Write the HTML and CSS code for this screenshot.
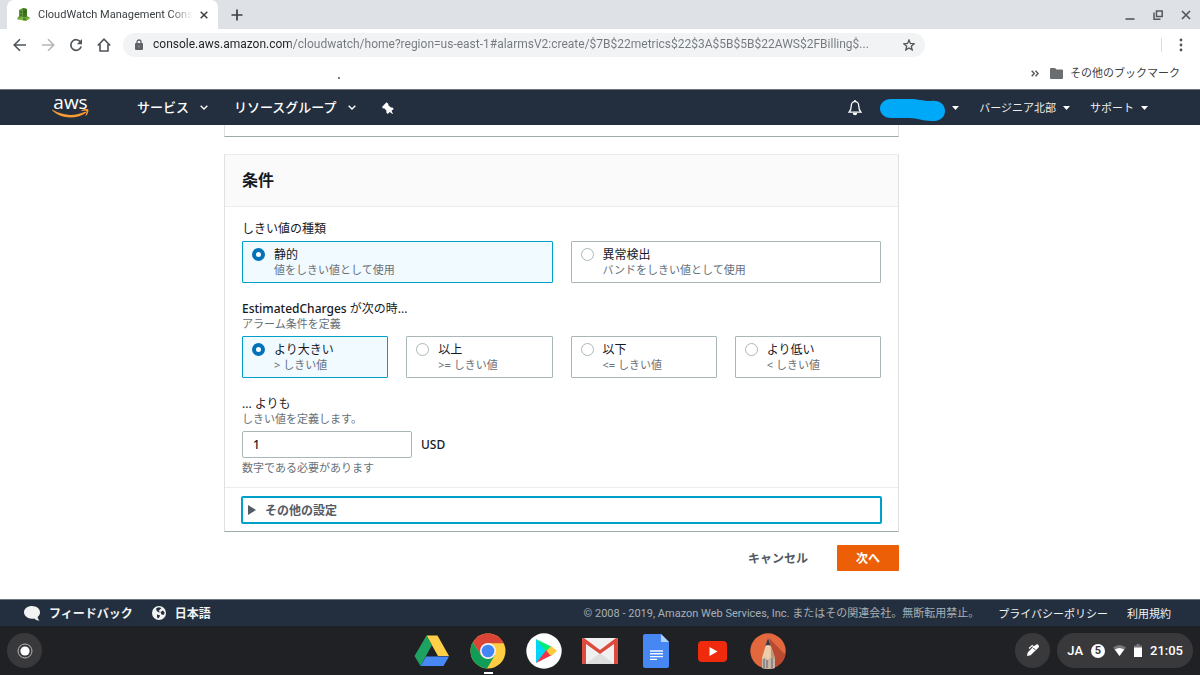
FILE: index.html
```html
<!DOCTYPE html>
<html lang="ja">
<head>
    <meta charset="utf-8">
    <title>CloudWatch Management Console</title>
    <link rel="stylesheet" href="styles.css">
</head>
<body>
    <div class="tab-strip">
        <div class="tab">
            <svg class="favicon" width="14" height="14" viewBox="0 0 14 14">
                <path d="M2 2l4-2 4 1v7l3 2-4 3-9-2 2-3z" fill="#5d9732"/>
                <path d="M6 0l4 1v7l-4 2z" fill="#3f7425"/>
                <path d="M0 11l5-2 8 1-4 3z" fill="#7eb543"/>
                <path d="M3 4h2M3 7h2M7 4h2M6 11h3" stroke="#29521c"/>
            </svg>
            <span class="tab-title">CloudWatch Management Cons</span>
            <button class="icon-button" aria-label="タブを閉じる">
                <svg width="8" height="8" viewBox="0 0 8 8"><path d="M.7.7l6.6 6.6M7.3.7L.7 7.3" stroke="#3c4043" stroke-width="1.5"/></svg>
            </button>
        </div>
        <button class="icon-button new-tab" aria-label="新しいタブ">
            <svg width="12" height="12" viewBox="0 0 12 12"><path d="M6 .5v11M.5 6h11" stroke="#3c4043" stroke-width="1.7"/></svg>
        </button>
        <div class="window-buttons">
            <button class="icon-button" aria-label="最小化">
                <svg width="10" height="10" viewBox="0 0 10 10"><path d="M.5 9h9" stroke="#54585d" stroke-width="1.6"/></svg>
            </button>
            <button class="icon-button" aria-label="元に戻す">
                <svg width="10" height="10" viewBox="0 0 10 10" fill="none" stroke="#54585d" stroke-width="1.5"><path d="M3.5 1h5.7v5.5H3.5zM1 2.5V9.2h6.5"/></svg>
            </button>
            <button class="icon-button" aria-label="閉じる">
                <svg width="10" height="10" viewBox="0 0 10 10"><path d="M1 1l8 8M9 1L1 9" stroke="#54585d" stroke-width="1.7"/></svg>
            </button>
        </div>
    </div>

    <div class="toolbar">
        <button class="icon-button" aria-label="戻る">
            <svg width="14" height="14" viewBox="0 0 14 14" fill="none" stroke="#50555a" stroke-width="1.6"><path d="M13 7H1.5M7 1.2L1.2 7 7 12.8"/></svg>
        </button>
        <button class="icon-button" aria-label="進む">
            <svg width="14" height="14" viewBox="0 0 14 14" fill="none" stroke="#b4b7ba" stroke-width="1.6"><path d="M1 7h11.5M7 1.2L12.8 7 7 12.8"/></svg>
        </button>
        <button class="icon-button" aria-label="再読み込み">
            <svg width="14" height="14" viewBox="0 0 14 14"><path d="M11.7 4.3A5.3 5.3 0 1 0 12.2 8.6" fill="none" stroke="#50555a" stroke-width="1.7"/><path d="M13 1v5.2H7.8z" fill="#50555a"/></svg>
        </button>
        <button class="icon-button" aria-label="ホーム">
            <svg width="14" height="14" viewBox="0 0 14 14" fill="none" stroke="#50555a" stroke-width="1.6"><path d="M.8 7.5L7 1.2l6.2 6.3M3 6v7h8V6"/></svg>
        </button>
        <div class="address-bar">
            <svg width="8" height="11" viewBox="0 0 8 11"><path d="M2 5V3a2 2 0 0 1 4 0v2" fill="none" stroke="#5f6368" stroke-width="1.3"/><rect y="4" width="8" height="7" rx="1" fill="#5f6368"/><circle cx="4" cy="7.5" r=".9" fill="#8b8f93"/></svg>
            <input class="url" type="text" aria-label="アドレス" value="console.aws.amazon.com/cloudwatch/home?region=us-east-1#alarmsV2:create/$7B$22metrics$22$3A$5B$5B$22AWS$2FBilling$...">
            <button class="icon-button" aria-label="ブックマークに追加">
                <svg width="12" height="12" viewBox="0 0 12 12"><path d="M6 1l1.4 3.5 3.8.3-2.9 2.4.9 3.7L6 8.9l-3.2 2 .9-3.7L.8 4.8l3.8-.3z" fill="none" stroke="#50555a" stroke-width="1.3"/></svg>
            </button>
        </div>
        <button class="icon-button menu-button" aria-label="メニュー">
            <svg width="4" height="14" viewBox="0 0 4 14" fill="#50555a"><circle cx="2" cy="2" r="1.4"/><circle cx="2" cy="7" r="1.4"/><circle cx="2" cy="12" r="1.4"/></svg>
        </button>
    </div>

    <div class="bookmarks">
        <span class="speck"></span>
        <button class="icon-button" aria-label="他のブックマーク">
            <svg width="8" height="7" viewBox="0 0 8 7" fill="none" stroke="#54585d" stroke-width="1.4"><path d="M.7.7l2.6 2.8L.7 6.3M4.5.7l2.6 2.8-2.6 2.8"/></svg>
        </button>
        <a class="bookmark" href="#">
            <svg width="13" height="11" viewBox="0 0 13 11"><path d="M1 0h4l1.5 1.6H12a1 1 0 0 1 1 1V10a1 1 0 0 1-1 1H1a1 1 0 0 1-1-1V1a1 1 0 0 1 1-1z" fill="#6b6e71"/></svg>
            その他のブックマーク
        </a>
    </div>

    <nav class="aws-nav">
        <a class="aws-logo" href="#">
            <span class="aws-name">aws</span>
            <svg width="37" height="9" viewBox="0 0 37 9" fill="#f79b34"><path d="M.5.8C11 7 23 7.500 33 2.800c1-.4 1.500.5.700 1.100C24 10.500 9 10 .2 1.600-.2 1.100.1.600.5.8z"/><path d="M29.500 1.400C31.500-.1 35.500-.2 36.200.5c.7.9-.2 4.700-2.200 6.300-.4.300-.7.100-.5-.3.700-1.600 1.300-3.700.9-4.300-.5-.6-2.800-.5-4.500-.3-.5.100-.7-.2-.4-.5z"/></svg>
        </a>
        <a class="nav-main" href="#">サービス
            <svg width="8" height="5" viewBox="0 0 8 5"><path d="M.7.7L4 4 7.300.7" fill="none" stroke="#fff" stroke-width="1.400"/></svg>
        </a>
        <a class="nav-main" href="#">リソースグループ
            <svg width="8" height="5" viewBox="0 0 8 5"><path d="M.7.7L4 4 7.300.7" fill="none" stroke="#fff" stroke-width="1.400"/></svg>
        </a>
        <button class="icon-button pin" aria-label="ピン留め">
            <svg width="12" height="12" viewBox="0 0 12 12" fill="#fff"><path d="M4.500.2l2 1.800-.2 1.300L9 5.600l1.400-.2 1.400 1.500-2.300 1.900L11 11.900l-.5.100-2.800-2-1.900 2-1.500-1.500.2-1.700L2.200 6.200.7 6.400.2 4.800z"/></svg>
        </button>
        <div class="nav-right">
            <button class="icon-button" aria-label="通知">
                <svg width="14" height="16" viewBox="0 0 14 16"><path d="M7 1.700c2.500 0 3.700 1.800 3.700 4 0 3.500.7 4.800 2.300 6.500H1c1.600-1.700 2.300-3 2.300-6.500 0-2.200 1.200-4 3.700-4z" fill="none" stroke="#fff" stroke-width="1.300"/><path d="M6.200 0h1.600v2H6.200zM4.800 13h4.400a2.200 2.200 0 0 1-4.400 0z" fill="#fff"/></svg>
            </button>
            <a class="account" href="#" aria-label="アカウント">
                <svg width="66" height="26" viewBox="0 0 66 26"><path d="M11 4h19c9 0 12 2 21 2 9-1 14 4 14 10s-5 11-14 10c-9 0-13-3-22-3H11C4 23 0 18 0 13.500S4 4 11 4z" fill="#00a8f8"/></svg>
                <svg width="7" height="4" viewBox="0 0 7 4"><path d="M0 0h7L3.500 4z" fill="#fff"/></svg>
            </a>
            <a class="nav-sub" href="#">バージニア北部
                <svg width="7" height="4" viewBox="0 0 7 4"><path d="M0 0h7L3.500 4z" fill="#fff"/></svg>
            </a>
            <a class="nav-sub" href="#">サポート
                <svg width="7" height="4" viewBox="0 0 7 4"><path d="M0 0h7L3.500 4z" fill="#fff"/></svg>
            </a>
        </div>
    </nav>

    <main class="content">
        <div class="card card-previous"></div>

        <form class="card">
            <h2 class="card-title">条件</h2>
            <div class="card-body">
                <div class="field" role="radiogroup" aria-labelledby="type-label">
                    <div class="field-head">
                        <div id="type-label">しきい値の種類</div>
                    </div>
                    <div class="tiles tiles-2">
                        <label class="tile selected">
                            <input class="radio" type="radio" name="type" checked>
                            <span>静的<small class="hint">値をしきい値として使用</small></span>
                        </label>
                        <label class="tile">
                            <input class="radio" type="radio" name="type">
                            <span>異常検出<small class="hint">バンドをしきい値として使用</small></span>
                        </label>
                    </div>
                </div>

                <div class="field" role="radiogroup" aria-labelledby="operator-label">
                    <div class="field-head">
                        <div id="operator-label"><span class="latin">EstimatedCharges</span> が次の時...</div>
                        <small class="hint">アラーム条件を定義</small>
                    </div>
                    <div class="tiles tiles-4">
                        <label class="tile selected">
                            <input class="radio" type="radio" name="operator" checked>
                            <span>より大きい<small class="hint">&gt; しきい値</small></span>
                        </label>
                        <label class="tile">
                            <input class="radio" type="radio" name="operator">
                            <span>以上<small class="hint">&gt;= しきい値</small></span>
                        </label>
                        <label class="tile">
                            <input class="radio" type="radio" name="operator">
                            <span>以下<small class="hint">&lt;= しきい値</small></span>
                        </label>
                        <label class="tile">
                            <input class="radio" type="radio" name="operator">
                            <span>より低い<small class="hint">&lt; しきい値</small></span>
                        </label>
                    </div>
                </div>

                <div class="field">
                    <div class="field-head">
                        <label for="threshold">... よりも</label>
                        <small class="hint">しきい値を定義します。</small>
                    </div>
                    <div class="amount">
                        <input class="amount-input" id="threshold" type="text" value="1">
                        <span class="latin">USD</span>
                    </div>
                    <small class="hint constraint">数字である必要があります</small>
                </div>
            </div>
            <div class="card-footer">
                <button class="expander" type="button" aria-expanded="false">
                    <svg width="8" height="10" viewBox="0 0 8 10"><path d="M0 0l8 5-8 5z" fill="#545b64"/></svg>
                    その他の設定
                </button>
            </div>
        </form>

        <div class="actions">
            <button class="button button-link">キャンセル</button>
            <button class="button button-primary">次へ</button>
        </div>
    </main>

    <footer class="aws-footer">
        <a class="footer-tool" href="#">
            <svg width="16" height="15" viewBox="0 0 16 15"><path d="M8 0c4.500 0 8 2.800 8 6.300 0 2-.9 3.600-2.400 4.700.2 1.400.8 2.500 1.900 3.500-2.200 0-3.900-.8-5.100-2.100-.8.200-1.600.3-2.400.3-4.500 0-8-2.800-8-6.400S3.500 0 8 0z" fill="#f2f3f3"/></svg>
            フィードバック
        </a>
        <a class="footer-tool" href="#">
            <svg width="14" height="14" viewBox="0 0 14 14"><circle cx="7" cy="7" r="7" fill="#f2f3f3"/><path d="M6.500 1.200L9.500 2 8 3.500 6.800 4.800 8 6.500 6 6 4.500 4.500 4 2.500zM8.500 6L11 4.500l1.700 2.300L11.500 9 9.500 8.500zM5 8.500l3 .8L7.500 11 6 12.500 5 11z" fill="#232f3e"/></svg>
            日本語
        </a>
        <span class="copyright">© 2008 - 2019, Amazon Web Services, Inc. またはその関連会社。無断転用禁止。</span>
        <a class="footer-link" href="#">プライバシーポリシー</a>
        <a class="footer-link" href="#">利用規約</a>
    </footer>

    <div class="shelf">
        <button class="round-button" aria-label="ランチャー">
            <svg width="16" height="16" viewBox="0 0 16 16"><circle cx="8" cy="8" r="7" fill="none" stroke="#b5b5b7"/><circle cx="8" cy="8" r="4.600" fill="#fff"/></svg>
        </button>
        <div class="apps">
            <button class="app" aria-label="ドライブ">
                <svg width="36" height="36" viewBox="0 0 36 36"><path d="M12.500 2.500h11L35 23H24z" fill="#ffcf48"/><path d="M12.500 2.500L18 12 6.500 33 .5 23z" fill="#1da261"/><path d="M12 23.500h23L29.500 33h-23z" fill="#4688f4"/></svg>
            </button>
            <button class="app running" aria-label="Chrome">
                <svg width="36" height="36" viewBox="0 0 36 36"><circle cx="18" cy="18" r="17.500" fill="#ffcd40"/><path d="M2.800 9.300A17.500 17.500 0 0 1 33.700 10.300H18L11 22z" fill="#db4437"/><path d="M2.800 9.300A17.500 17.500 0 0 0 17 35.500L25 22l-7 4-7-4z" fill="#0f9d58"/><circle cx="18" cy="18" r="8" fill="#f1f1f1"/><circle cx="18" cy="18" r="6.300" fill="#4285f4"/></svg>
            </button>
            <button class="app" aria-label="Play ストア">
                <svg width="36" height="36" viewBox="0 0 36 36"><circle cx="18" cy="18" r="17.700" fill="#fff"/><path d="M10 6l12 12-12 12z" fill="#00d5f5"/><path d="M10 6l16 8-5.500 5z" fill="#00ee76"/><path d="M10 30l16-8-5.500-5z" fill="#f43249"/><path d="M25 13l6 5-6 5-4.500-5z" fill="#ffc83d"/></svg>
            </button>
            <button class="app" aria-label="Gmail">
                <svg width="36" height="36" viewBox="0 0 36 36"><rect y="5" width="36" height="26" rx="2" fill="#f0f0f0"/><path d="M4 31l14-11 14 11z" fill="#dedede"/><path d="M2 5l16 12L34 5q2 0 2 3v21q0 2-2 2h-2V11L18 21 4 11v20H2q-2 0-2-2V8q0-3 2-3z" fill="#de4b3c"/></svg>
            </button>
            <button class="app" aria-label="ドキュメント">
                <svg width="36" height="36" viewBox="0 0 36 36"><path d="M7 1h16l8 8v24q0 2-2 2H7q-2 0-2-2V3q0-2 2-2z" fill="#4687f3"/><path d="M23 1l8 8h-8z" fill="#b1d0fb"/><path d="M12 18h13M12 20.800h13M12 23.600h13M12 26.400h7" stroke="#f4f7fd" stroke-width="1.400"/></svg>
            </button>
            <button class="app" aria-label="YouTube">
                <svg width="36" height="36" viewBox="0 0 36 36"><rect x="4" y="8" width="29" height="21" rx="4" fill="#f02a0d"/><path d="M15.500 14l8 4.500-8 4.500z" fill="#fff"/></svg>
            </button>
            <button class="app" aria-label="スケッチ">
                <svg width="36" height="36" viewBox="0 0 36 36"><circle cx="18" cy="18" r="17.700" fill="#e4683e"/><path d="M19 5l16.500 17A18 18 0 0 1 23 35z" fill="#b94931"/><path d="M18 5l7 20v10q-7 1.500-13 0V25z" fill="#edceab"/><path d="M18 5l2.800 8q-2.800-2-5.500 0z" fill="#333a42"/><path d="M20.800 13L25 25v10l-4 .5z" fill="#b9977c"/><path d="M12 26l3-2 3 3 3-3 4 2v9q-7 1.500-13 0z" fill="#c9b5a6"/><path d="M14 26v9M17 27v8M22 25v10" stroke="#6b6f77" stroke-width="1.200"/></svg>
            </button>
        </div>
        <div class="tray">
            <button class="round-button" aria-label="ペン">
                <svg width="13" height="13" viewBox="0 0 13 13"><path d="M1 12l.7-3.600L7 3.100l-.8-.8L3.500 5l-.9-.9L6.200.7l1.700 1.500L10 .7q1.400-.8 2.400.3t.2 2.400L4.600 11.300z" fill="#fff"/><path d="M7.400 4l1.800 1.800" stroke="#39393c"/></svg>
            </button>
            <button class="status">
                <span>JA</span>
                <span class="badge">5</span>
                <svg width="13" height="11" viewBox="0 0 13 11"><path d="M0 2.500q6.500-5 13 0L6.500 11z" fill="#77777a"/><path d="M1.800 4.500q4.700-3 9.400 0L6.500 11z" fill="#fff"/></svg>
                <svg width="8" height="13" viewBox="0 0 8 13"><path d="M2.500 0h3v1.500H8V4H0V1.500h2.500z" fill="#77777a"/><path d="M0 3.500h8V13H0z" fill="#fff"/></svg>
                <span>21:05</span>
            </button>
        </div>
    </div>
</body>
</html>
```
FILE: styles.css
```css
* {
    box-sizing: border-box;
}

body {
    margin: 0;
    min-height: 100vh;
    display: flex;
    flex-direction: column;
    background-color: #fff;
    color: #16191f;
    font-family: "Noto Sans", "Noto Sans CJK JP", sans-serif;
    font-size: 12px;
    line-height: 15px;
}

a {
    color: inherit;
    text-decoration: none;
}

button,
input {
    font-family: inherit;
    font-size: inherit;
    line-height: inherit;
    color: inherit;
}

svg {
    display: block;
    flex-shrink: 0;
}

.icon-button {
    padding: 0;
    border: none;
    background: none;
    cursor: pointer;
}

/* browser */
.tab-strip {
    height: 29px;
    display: flex;
    align-items: center;
    padding: 0 9px 0 7px;
    background-color: #dee1e6;
    font-family: Roboto, "Noto Sans CJK JP", sans-serif;
}

.tab {
    width: 211px;
    height: 29px;
    display: flex;
    align-items: center;
    gap: 7px;
    padding: 0 10px;
    border-radius: 7px 7px 0 0;
    background-color: #fff;
    color: #3c4043;
}

.tab-title {
    flex: 1;
    min-width: 0;
    white-space: nowrap;
    font-size: 11px;
    -webkit-mask-image: linear-gradient(to right, #000 85%, transparent);
    mask-image: linear-gradient(to right, #000 85%, transparent);
}

.new-tab {
    margin-left: 13px;
}

.window-buttons {
    margin-left: auto;
    display: flex;
    gap: 18px;
}

.toolbar {
    height: 31px;
    display: flex;
    align-items: center;
    gap: 14px;
    padding: 0 17px 0 13px;
    font-family: Roboto, "Noto Sans CJK JP", sans-serif;
}

.address-bar {
    width: 802px;
    height: 24px;
    display: flex;
    align-items: center;
    gap: 10px;
    margin-left: -2px;
    padding: 0 10px 0 12px;
    border-radius: 12px;
    background-color: #f1f3f4;
}

.url {
    flex: 1;
    min-width: 0;
    padding: 0;
    border: none;
    outline: none;
    /* host dark, path grey */
    background: linear-gradient(to right, #202124 138px, #74787d 138px);
    -webkit-background-clip: text;
    background-clip: text;
    color: transparent;
}

.menu-button {
    margin-left: auto;
    padding-left: 17px;
    border-left: 1px solid #dadce0;
}

.bookmarks {
    height: 29px;
    display: flex;
    align-items: center;
    justify-content: flex-end;
    gap: 11px;
    padding: 0 20px 2px;
    color: #3c4043;
    font-family: Roboto, "Noto Sans CJK JP", sans-serif;
    font-size: 11px;
}

.bookmark {
    display: flex;
    align-items: center;
    gap: 7px;
}

.speck {
    width: 2px;
    height: 2px;
    margin: 8px auto 0 318px;
    border-radius: 50%;
    background-color: #555;
}

/* AWS header */
.aws-nav {
    height: 36px;
    display: flex;
    align-items: center;
    padding: 0 52px;
    border-top: 1px solid #6d757f;
    background-color: #232f3e;
    color: #fff;
}

.aws-logo {
    width: 37px;
    margin-right: 48px;
    display: flex;
    flex-direction: column;
    align-items: center;
    gap: 2px;
}

.aws-name {
    font-family: "Open Sans", sans-serif;
    font-size: 19px;
    font-weight: 500;
    line-height: 10px;
}

.nav-main {
    display: flex;
    align-items: center;
    gap: 11px;
    margin-right: 26px;
    font-size: 13px;
    font-weight: 500;
}

.nav-right {
    margin-left: auto;
    display: flex;
    align-items: center;
    gap: 20px;
}

.account {
    display: flex;
    align-items: center;
    gap: 6px;
    margin-left: -2px;
}

.nav-sub {
    display: flex;
    align-items: center;
    gap: 7px;
    font-size: 11px;
    color: #eee;
}

/* form */
.content {
    flex: 1;
    padding: 0 301px 0 224px;
}

.card {
    border: 1px solid #dfe2e2;
    border-top-color: #eaeded;
    border-bottom-color: #9fabab;
    background-color: #fff;
}

.card-previous {
    height: 12px;
    margin-bottom: 17px;
    border-top: none;
}

.card-title {
    margin: 0;
    padding: 13px 17px 14px;
    border-bottom: 1px solid #eaeded;
    background-color: #fafafa;
    font-size: 16px;
    line-height: 24px;
}

.card-body {
    display: grid;
    gap: 18px;
    padding: 14px 17px 12px;
}

.field-head {
    margin-bottom: 5px;
}

.latin {
    font-weight: 500;
}

.hint {
    display: block;
    font-size: 11px;
    color: #687078;
}

.tiles {
    display: grid;
    gap: 18px;
}

.tiles-2 {
    grid-template-columns: repeat(2, 1fr);
}

.tiles-4 {
    grid-template-columns: repeat(4, 1fr);
}

.tile {
    display: flex;
    align-items: flex-start;
    gap: 9px;
    padding: 5px 9px;
    border: 1px solid #aab7b8;
    border-radius: 1px;
}

.tile.selected {
    border-color: #00a1c9;
    background-color: #f1faff;
}

.radio {
    appearance: none;
    width: 13px;
    height: 13px;
    margin: 1px 0 0;
    border: 1px solid #aab7b8;
    border-radius: 50%;
    background-color: #fff;
}

.radio:checked {
    border: 4px solid #0073bb;
}

.amount {
    display: flex;
    align-items: center;
    gap: 9px;
}

.amount-input {
    width: 170px;
    height: 27px;
    padding: 0 10px;
    border: 1px solid #aab7b8;
    border-radius: 2px;
    font-weight: 500;
}

.constraint {
    margin-top: 2px;
}

.card-footer {
    padding: 8px 16px 7px;
    border-top: 1px solid #eaeded;
}

.expander {
    width: 100%;
    height: 28px;
    display: flex;
    align-items: center;
    gap: 9px;
    padding: 0 5px;
    border: 2px solid #00a1c9;
    border-radius: 2px;
    background: none;
    color: #545b64;
    font-weight: bold;
}

.actions {
    display: flex;
    justify-content: flex-end;
    gap: 10px;
    margin-top: 13px;
}

.button {
    height: 26px;
    padding: 0 19px;
    border: none;
    border-radius: 1px;
    font-weight: bold;
    cursor: pointer;
}

.button-link {
    background: none;
    color: #545b64;
}

.button-primary {
    background-color: #ec5f07;
    color: #fff;
}

/* AWS footer */
.aws-footer {
    height: 27px;
    display: flex;
    align-items: center;
    padding: 0 29px 0 24px;
    border-top: 1px solid #6d757f;
    background-color: #232f3e;
    color: #f2f3f3;
}

.footer-tool {
    display: flex;
    align-items: center;
    gap: 9px;
    margin-right: 19px;
    font-weight: bold;
}

.copyright {
    margin-left: auto;
    font-family: Roboto, "Noto Sans CJK JP", sans-serif;
    font-size: 11px;
    color: #a9afb6;
}

.footer-link {
    margin-left: 19px;
    font-size: 11px;
}

/* shelf */
.shelf {
    height: 49px;
    display: grid;
    grid-template-columns: 1fr auto 1fr;
    align-items: center;
    padding: 0 7px;
    background-color: #202124;
    font-family: Roboto, sans-serif;
}

.round-button {
    width: 35px;
    height: 35px;
    display: flex;
    align-items: center;
    justify-content: center;
    padding: 0;
    border: none;
    border-radius: 50%;
    background-color: #39393c;
}

.apps {
    display: flex;
    gap: 20px;
}

.app {
    position: relative;
    padding: 0;
    border: none;
    background: none;
}

.running::after {
    content: "";
    position: absolute;
    left: 14px;
    bottom: -5px;
    width: 9px;
    height: 2px;
    background-color: #fff;
}

.tray {
    justify-self: end;
    display: flex;
    gap: 7px;
}

.status {
    height: 35px;
    display: flex;
    align-items: center;
    gap: 8px;
    padding: 0 10px;
    border: none;
    border-radius: 18px;
    background-color: #39393c;
    color: #fff;
    font-size: 13px;
    font-weight: 500;
}

.badge {
    width: 14px;
    height: 14px;
    border-radius: 50%;
    background-color: #fff;
    color: #39393c;
    font-size: 11px;
    font-weight: bold;
    line-height: 14px;
    text-align: center;
}
```
